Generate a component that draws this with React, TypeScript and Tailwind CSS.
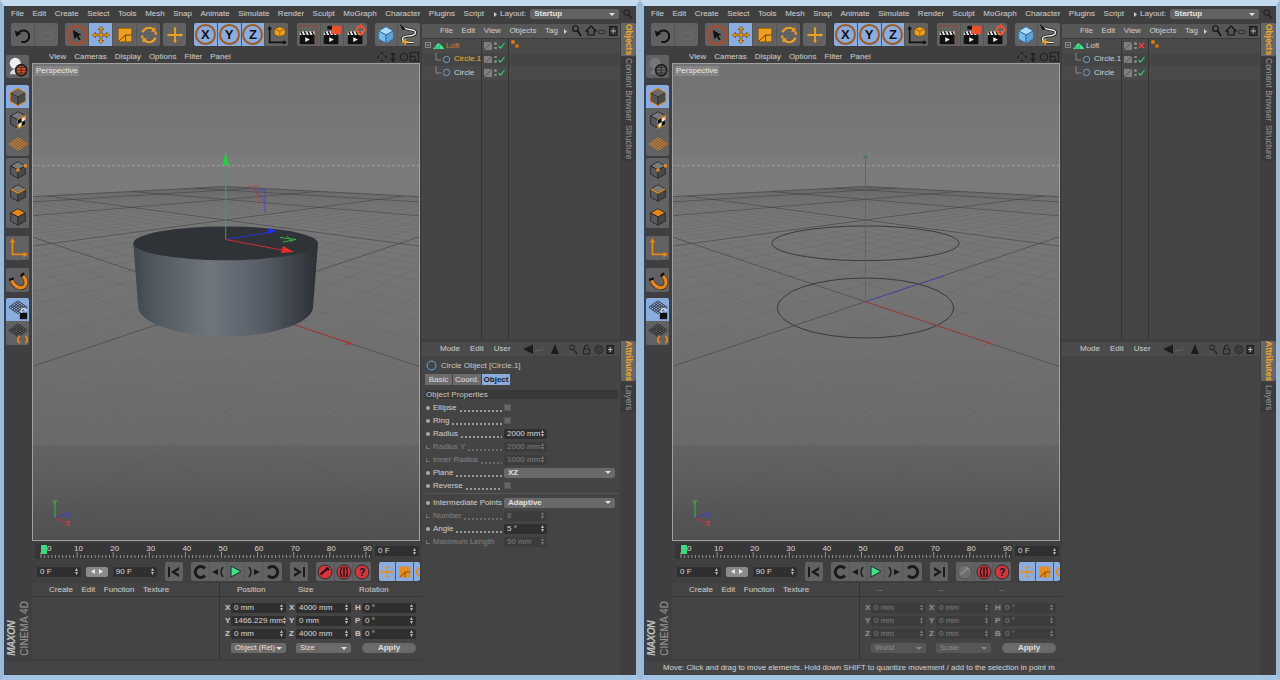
import React from "react";

const ORANGE = "#f0a020";

/* ---------- small building blocks ---------- */

function Handle({ className }: { className: string }) {
  return (
    <div
      className={`shrink-0 bg-[radial-gradient(#8c8c8c_40%,transparent_45%)] bg-[length:2px_2px] ${className}`}
    />
  );
}

function Ic({ children, size = 22 }: { children: React.ReactNode; size?: number }) {
  return (
    <svg viewBox="0 0 24 24" width={size} height={size} fill="none">
      {children}
    </svg>
  );
}

function Btn({ active, children }: { active?: boolean; children?: React.ReactNode }) {
  return (
    <div
      className={`flex min-w-0 flex-1 items-center justify-center overflow-hidden border-r border-[#555] last:border-r-0 ${
        active ? "bg-[#8aacdf]" : "bg-[#626262]"
      }`}
    >
      {children}
    </div>
  );
}

function Stepper({ dim }: { dim?: boolean }) {
  return (
    <svg width="3" height="7" viewBox="0 0 3 7" className="shrink-0">
      <path d="M1.5 0 3 3H0zM0 4h3L1.5 7z" fill={dim ? "#777" : "#bbb"} />
    </svg>
  );
}

function Field({ text, dim, className }: { text: string; dim?: boolean; className: string }) {
  return (
    <div
      className={`flex h-[10px] items-center justify-between rounded-[2px] px-[3px] text-[8px] leading-none ${
        dim ? "bg-[#3c3c3c] text-[#6f6f6f]" : "bg-[#2f2f2f] text-[#c8c8c8]"
      } ${className}`}
    >
      <span className="whitespace-nowrap">{text}</span>
      <Stepper dim={dim} />
    </div>
  );
}

function Caret({ dim }: { dim?: boolean }) {
  return (
    <svg width="6" height="3" viewBox="0 0 6 3" className="shrink-0">
      <path d="M0 0h6L3 3z" fill={dim ? "#888" : "#e0e0e0"} />
    </svg>
  );
}

/* ---------- toolbar icons ---------- */

const CubeFaces = ({
  top = "#7a7a7a",
  left = "#5a5a5a",
  right = "#484848",
  stroke = "#2a2a2a",
  outline = "",
}) => (
  <>
    <path d="M12 3 20 7.5 12 12 4 7.5z" fill={top} stroke={stroke} strokeLinejoin="round" />
    <path d="M4 7.5 12 12v9l-8-4.5z" fill={left} stroke={stroke} strokeLinejoin="round" />
    <path d="M20 7.5 12 12v9l8-4.5z" fill={right} stroke={stroke} strokeLinejoin="round" />
    {outline && <path d="M12 2.500 20.500 7.500v9L12 21.500 3.500 16.500v-9z" stroke={outline} strokeWidth="1.200" strokeLinejoin="round" />}
  </>
);

function Diamond({ color, cy = 10, h = 7 }: { color: string; cy?: number; h?: number }) {
  const lines = [];
  for (let i = 0; i <= 5; i++) {
    const t = i / 5;
    lines.push(
      <path
        key={`a${i}`}
        d={`M${2 + 10 * t} ${cy - h * t}L${12 + 10 * t} ${cy + h - h * t}`}
        stroke={color}
        strokeWidth=".8"
      />,
      <path
        key={`b${i}`}
        d={`M${2 + 10 * t} ${cy + h * t}L${12 + 10 * t} ${cy - h + h * t}`}
        stroke={color}
        strokeWidth=".8"
      />
    );
  }
  return <>{lines}</>;
}

const MoveIcon = () => (
  <Ic>
    <path
      d="M12 2.5 15 6h-2v5h5V9l3.5 3-3.5 3v-2h-5v5h2l-3 3.5L9 18h2v-5H6v2l-3.5-3L6 9v2h5V6H9z"
      fill={ORANGE}
      stroke="#5c3c08"
      strokeWidth=".7"
    />
  </Ic>
);

const ScaleIcon = () => (
  <Ic>
    <rect x="4.5" y="4.5" width="15" height="15" fill={ORANGE} stroke="#6a4408" strokeWidth=".7" />
    <path d="M5 19 12.5 12M12.5 12V19M12.5 12H19.5" stroke="#5a3a08" strokeWidth="1" />
  </Ic>
);

const RotateIcon = () => (
  <Ic>
    <path d="M5 9a7.5 7.5 0 0 1 12-3" stroke={ORANGE} strokeWidth="2.4" />
    <path d="M19 15a7.5 7.5 0 0 1-12 3" stroke={ORANGE} strokeWidth="2.4" />
    <path d="M19 3.5v5h-5zM5 20.5v-5h5z" fill={ORANGE} />
    <path d="M5.2 15.5a7.5 7.5 0 0 1-.7-3M18.8 8.5a7.5 7.5 0 0 1 .7 3" stroke={ORANGE} strokeWidth="2.4" />
  </Ic>
);

const LetterRing = ({ letter }: { letter: string }) => (
  <div className="flex h-[21px] w-[21px] items-center justify-center rounded-full border-2 border-[#a05a1c] text-[13px] leading-none font-bold text-[#111]">
    {letter}
  </div>
);

function Clapper({ extra }: { extra?: React.ReactNode }) {
  return (
    <Ic>
      <rect x="3" y="8" width="16" height="4" fill="#e8e8e8" />
      <path d="M4 8 6 12M8 8l2 4M12 8l2 4M16 8l2 4" stroke="#111" strokeWidth="1.6" />
      <rect x="3" y="12" width="16" height="10" fill="#111" />
      <path d="M9 14.5v5l5-2.5z" fill="#eee" />
      {extra}
    </Ic>
  );
}

function Toolbar() {
  return (
    <div className="flex h-[25px] shrink-0 items-center">
      <Handle className="ml-px h-[20px] w-[4px]" />
      <div className="ml-px flex h-[23px] w-[47px] overflow-hidden rounded-[2px]">
        <Btn>
          <Ic size={20}>
            <path d="M6 11a7 7 0 1 1 4 9" stroke="#111" strokeWidth="2.4" />
            <path d="M2 6.5 4 14l6-4z" fill="#111" />
          </Ic>
        </Btn>
        <Btn>
          <Ic size={18}>
            <rect x="5" y="9" width="14" height="8" rx="2" stroke="#6f6f6f" strokeWidth="1" />
            <path d="M14 7h5v3" stroke="#6f6f6f" />
          </Ic>
        </Btn>
      </div>
      <div className="ml-[7px] flex h-[23px] w-[95px] overflow-hidden rounded-[2px]">
        <Btn>
          <Ic>
            <circle cx="12" cy="12" r="10" stroke="#b8461f" strokeWidth="2" />
            <path d="M7.5 6.5 17 12l-3.6.9 2.6 4-1.6 1-2.6-4L9 16.5z" fill="#111" />
          </Ic>
        </Btn>
        <Btn active>
          <MoveIcon />
        </Btn>
        <Btn>
          <ScaleIcon />
        </Btn>
        <Btn>
          <RotateIcon />
        </Btn>
      </div>
      <div className="ml-[3px] flex h-[23px] w-[23px] overflow-hidden rounded-[2px]">
        <Btn>
          <Ic>
            <path d="M12 3 14 6h-1v5h5v-1l3 2-3 2v-1h-5v5h1l-2 3-2-3h1v-5H6v1l-3-2 3-2v1h5V6h-1z" fill={ORANGE} />
          </Ic>
        </Btn>
      </div>
      <div className="ml-[8px] flex h-[23px] w-[94px] overflow-hidden rounded-[2px]">
        <Btn active>
          <LetterRing letter="X" />
        </Btn>
        <Btn active>
          <LetterRing letter="Y" />
        </Btn>
        <Btn active>
          <LetterRing letter="Z" />
        </Btn>
        <Btn>
          <Ic>
            <path d="M4 5v15h16" stroke="#111" strokeWidth="1.8" />
            <path d="M4 2 1.5 6h5zM23 20l-4-2.5v5z" fill="#111" />
            <path d="M15 3 21 5.5v6L15 14l-6-2.5v-6z" fill={ORANGE} stroke="#5c3808" strokeWidth=".6" />
            <path d="M9 5.500 15 8l6-2.500M15 8v6" stroke="#8a5410" strokeWidth=".8" />
          </Ic>
        </Btn>
      </div>
      <div className="ml-[9px] flex h-[23px] w-[70px] overflow-hidden rounded-[2px]">
        <Btn>
          <Clapper extra={<path d="M3 7V2h19v19h-2" stroke="#9c3c20" strokeWidth="1" />} />
        </Btn>
        <Btn>
          <Clapper
            extra={
              <>
                <rect x="11" y="2" width="11" height="9" fill="#e8532c" />
                <rect x="7" y="2" width="5" height="4" fill="#111" />
              </>
            }
          />
        </Btn>
        <Btn>
          <Clapper
            extra={
              <>
                <circle cx="17" cy="6.500" r="4" stroke="#e8532c" strokeWidth="2.4" />
                <path d="M17 0v3M17 10v3M11 6.500h2M21 6.500h2" stroke="#e8532c" strokeWidth="1.800" />
              </>
            }
          />
        </Btn>
      </div>
      <div className="ml-[8px] flex h-[23px] w-[45px] overflow-hidden rounded-[2px]">
        <Btn>
          <Ic>
            <CubeFaces top="#a8dcf8" left="#78bcec" right="#5ea4dc" stroke="#3a6c94" />
          </Ic>
        </Btn>
        <Btn>
          <Ic>
            <path d="M6 4c4 3 14 1 13 6s-14 1-14 6 8 4 12 4" stroke="#222" strokeWidth="3.200" />
            <path d="M6 4c4 3 14 1 13 6s-14 1-14 6 8 4 12 4" stroke="#eee" strokeWidth="1.500" />
            <path d="M2 0 8 5 5 7z" fill="#111" />
            <path d="M8 16v7M4.500 19.500h7" stroke={ORANGE} strokeWidth="1.800" />
          </Ic>
        </Btn>
      </div>
    </div>
  );
}

/* ---------- left icon column ---------- */

function Sidebar({ selected }: { selected: boolean }) {
  const o = "#e8861c";
  return (
    <div className="flex h-full w-[27px] shrink-0 flex-col pt-[3px] pl-px">
      <Handle className="ml-[3px] h-[2px] w-[17px]" />
      <div className="mt-[3px] flex h-[23px] w-[23px] flex-col overflow-hidden rounded-[2px]">
        <Btn>
          <Ic>
            <circle cx="9" cy="8" r="6" fill={selected ? "#eee" : "#777"} />
            <path d="M3 20c1-5 5-6 8-6v6z" fill={selected ? "#ddd" : "#777"} />
            <circle cx="15.500" cy="15.500" r="7" fill="#222" />
            <circle cx="15.500" cy="15.500" r="5" fill={selected ? "#d8542c" : "#666"} />
            <path d="M10.500 15.500h10M15.500 10.500v10M11.500 12.500h8M11.500 18.500h8" stroke="#222" strokeWidth=".8" />
          </Ic>
        </Btn>
      </div>

      <div className="mt-[7px] flex w-[23px] flex-col overflow-hidden rounded-[2px]">
        <div className="flex h-[23px]">
          <Btn active>
            <Ic>
              <CubeFaces top="#6a6a6a" left="#585858" right="#4c4c4c" stroke="#333" outline={o} />
            </Ic>
          </Btn>
        </div>
        <div className="flex h-[24px]">
          <Btn>
            <Ic>
              <CubeFaces />
              <path d="M20 7.500 12 12v9l8-4.500z" fill="#eee" stroke={o} strokeWidth="1.400" />
              <path d="M12 12l4-2.250v4.500L12 16.500zM16 14.250l4-2.250v4.500l-4 2.250z" fill="#111" />
            </Ic>
          </Btn>
        </div>
        <div className="flex h-[24px]">
          <Btn>
            <Ic>
              <Diamond color="#e0801c" cy={12} />
            </Ic>
          </Btn>
        </div>
      </div>

      <div className="mt-[2px] flex w-[23px] flex-col overflow-hidden rounded-[2px]">
        <div className="flex h-[23px]">
          <Btn>
            <Ic>
              <CubeFaces />
              <circle cx="12" cy="12" r="2" fill={o} />
              <circle cx="20" cy="7.500" r="2" fill={o} />
            </Ic>
          </Btn>
        </div>
        <div className="flex h-[24px]">
          <Btn>
            <Ic>
              <CubeFaces />
              <path d="M4 7.500 12 12l8-4.500" stroke={o} strokeWidth="1.400" />
            </Ic>
          </Btn>
        </div>
        <div className="flex h-[23px]">
          <Btn>
            <Ic>
              <CubeFaces top={o} />
            </Ic>
          </Btn>
        </div>
      </div>

      <div className="mt-[8px] flex h-[24px] w-[23px] overflow-hidden rounded-[2px]">
        <Btn>
          <Ic>
            <path d="M6 4v15h14" stroke={o} strokeWidth="2" />
            <path d="M6 1 3 6h6zM23 19l-5-3v6z" fill={o} />
          </Ic>
        </Btn>
      </div>

      <div className="mt-[8px] flex h-[24px] w-[23px] overflow-hidden rounded-[2px]">
        <Btn>
          <Ic>
            <path d="M5 11C6 18 14 23 19 19 22 16 21 11 17 7" stroke="#2a2a2a" strokeWidth="5" />
            <path d="M5 11C6 18 14 23 19 19 22 16 21 11 17 7" stroke={o} strokeWidth="3.600" />
            <path d="M2 10.500l5-1.500.8 2.500-5 1.500zM14 7l3.500-3.500 2 2-3.500 3.500z" fill="#111" />
          </Ic>
        </Btn>
      </div>

      <div className="mt-[6px] flex w-[23px] flex-col overflow-hidden rounded-[2px]">
        <div className="flex h-[23px]">
          <Btn active>
            <Ic>
              <Diamond color="#222" cy={9} />
              <rect x="14" y="15" width="8" height="7" fill="#111" />
              <path d="M15.500 15v-2a2.500 2.500 0 0 1 5 0" stroke="#eee" strokeWidth="1.400" />
            </Ic>
          </Btn>
        </div>
        <div className="flex h-[24px]">
          <Btn>
            <Ic>
              <Diamond color="#222" cy={9} />
              <path d="M14 15a5 5 0 0 0 0 8M20 15a5 5 0 0 1 0 8" stroke={o} strokeWidth="2" />
            </Ic>
          </Btn>
        </div>
      </div>
    </div>
  );
}

/* ---------- viewport drawing ---------- */

const project = (u: number, v: number) => {
  const w = 0.007315 + (0.01087 * (u + v)) / 2;
  return [225.5 + (2.217 * (u - v)) / w, 165 + 1 / w];
};

const gridLine = (k: number) => {
  const t0 = -1.162 - k;
  const a = project(t0, k);
  const b = project(3.6, k);
  const c = project(k, t0);
  const d = project(k, 3.6);
  return `M${a[0]} ${a[1]}L${b[0]} ${b[1]}M${c[0]} ${c[1]}L${d[0]} ${d[1]}`;
};

const minorLines: number[] = [];
for (let i = -9; i <= 36; i++) {
  if (i % 10 !== 0) minorLines.push(i / 10);
}

function Viewport({ selected }: { selected: boolean }) {
  return (
    <div className="relative h-[478px] w-[388px] border border-[#a0a0a0]">
      <svg viewBox="33 64 386 476" width="386" height="476" className="block">
        <defs>
          <linearGradient id="vp-bg" x1="0" y1="63" x2="0" y2="541" gradientUnits="userSpaceOnUse">
            <stop offset="0" stopColor="#727272" />
            <stop offset="0.197" stopColor="#7a7a7a" />
            <stop offset="0.198" stopColor="#7c7c7c" />
            <stop offset="0.799" stopColor="#6a6a6a" />
            <stop offset="0.8" stopColor="#646464" />
            <stop offset="1" stopColor="#505050" />
          </linearGradient>
          <linearGradient id="cyl" x1="133" y1="0" x2="318" y2="0" gradientUnits="userSpaceOnUse">
            <stop offset="0" stopColor="#3f464d" />
            <stop offset="0.12" stopColor="#505860" />
            <stop offset="0.42" stopColor="#70767e" />
            <stop offset="0.7" stopColor="#565d66" />
            <stop offset="0.93" stopColor="#353a40" />
            <stop offset="1" stopColor="#2c3035" />
          </linearGradient>
        </defs>
        <rect x="32" y="63" width="388" height="478" fill="url(#vp-bg)" />
        <path d="M32 165.700H420" stroke="#a4a4a4" strokeDasharray="3 2" strokeWidth=".8" />
        {minorLines.map((k) => (
          <path key={k} d={gridLine(k)} stroke="#4c4c4c" strokeOpacity=".16" strokeWidth=".8" />
        ))}
        {[0, 1, 2, 3, 3.6].map((k) => (
          <path key={k} d={gridLine(k)} stroke="#404040" strokeOpacity=".65" strokeWidth=".9" />
        ))}

        {selected ? (
          <>
            <path d="M225.500 301.700 353 344" stroke="#b83232" strokeWidth=".9" />
            <path d="M353 344l-7-3.500 1 3.500-3 1.500z" fill="#b83232" />
            <path d="M133.300 243 138.300 308A87.500 30 0 0 0 313 308L318 243z" fill="url(#cyl)" />
            <ellipse cx="225.700" cy="243.300" rx="92.300" ry="16.900" fill="#2f3338" />
            <path d="M225.700 239.500V160" stroke="#30b040" strokeWidth=".9" />
            <path d="M225.700 152 229 165H222.400z" fill="#20d040" />
            <path d="M225.700 239.500 270 232" stroke="#2830d8" strokeWidth="1" />
            <path d="M277 231 268 234V228z" fill="#2030e0" />
            <path d="M225.700 239.500 282 250" stroke="#c83030" strokeWidth="1" />
            <path d="M294 252 281 253 283 246z" fill="#e82c2c" />
            <path d="M280 237.500 296 239.500 283 242M287 236 292 242" stroke="#30b840" strokeWidth="1" fill="none" />
            <path d="M248 186H259V205M250 188Q258 192 259 200" stroke="#b04848" strokeWidth=".8" fill="none" />
            <path d="M254 190H265V213M257 192Q263 197 265 204" stroke="#4848c8" strokeWidth=".8" fill="none" />
          </>
        ) : (
          <>
            <ellipse cx="225.500" cy="243.300" rx="93.500" ry="17.300" fill="none" stroke="#3a3a3a" strokeWidth="1" />
            <ellipse cx="225.500" cy="308" rx="88" ry="30" fill="none" stroke="#3a3a3a" strokeWidth="1" />
            <path d="M225.500 301.700V155" stroke="#3c7c40" strokeWidth=".9" />
            <path d="M223 159 225.500 155 228 159" stroke="#3c7c40" strokeWidth=".8" fill="none" />
            <path d="M225.500 301.700 305 275.700" stroke="#4a4aa8" strokeWidth=".9" />
            <path d="M305 275.700l-5 .2 1.500 2z" fill="#4a4aa8" />
            <path d="M225.500 301.700 353 344" stroke="#a83c3c" strokeWidth=".9" />
            <path d="M353 344l-7-3 1 3-3 1.500" stroke="#a83c3c" strokeWidth=".8" fill="none" />
          </>
        )}

        <path d="M55 518V504" stroke="#30a040" strokeWidth="1.500" />
        <path d="M55 518 66 514" stroke="#3838c0" strokeWidth="1" />
        <path d="M55 518 66 522" stroke="#c03030" strokeWidth="1" />
        <g fontFamily="Liberation Sans, sans-serif" fontSize="7" fontWeight="700">
          <text x="52.500" y="505" fill="#30b048">Y</text>
          <text x="65.500" y="517" fill="#3838d0">Z</text>
          <text x="65.500" y="526" fill="#d83030">X</text>
        </g>
      </svg>
      <span className="absolute top-[2px] left-[2px] bg-[#858585] px-[1px] text-[8px] leading-[10px] text-[#e0e0e0]">
        Perspective
      </span>
    </div>
  );
}

/* ---------- timeline ---------- */

function Timeline() {
  const ticks = [];
  for (let i = 0; i <= 92; i++) {
    const x = 6 + i * 3.61;
    ticks.push(<path key={i} d={`M${x} ${i % 10 === 0 ? 9 : 12}V15`} stroke="#bbb" strokeWidth=".7" />);
  }
  return (
    <div className="mt-[2px] flex h-[16px] shrink-0 items-center">
      <Handle className="h-[10px] w-[3px]" />
      <svg width="337" height="16" className="block shrink-0 bg-[#363636]">
        {ticks}
        <rect x="6" y="2" width="6" height="9" fill="#40d880" />
        <g fontFamily="Liberation Sans, sans-serif" fontSize="8" fill="#c8c8c8">
          {[0, 10, 20, 30, 40, 50, 60, 70, 80, 90].map((n, i) => (
            <text key={n} x={i === 0 ? 12 : 4 + i * 36.1 - 1} y="8">
              {n}
            </text>
          ))}
        </g>
      </svg>
      <Field text="0 F" className="ml-[3px] w-[44px]" />
    </div>
  );
}

function Cbtn({
  children,
  active,
  className = "",
}: {
  children: React.ReactNode;
  active?: boolean;
  className?: string;
}) {
  return (
    <div
      className={`flex h-[19px] items-center justify-center overflow-hidden border-r border-[#575757] last:border-r-0 ${
        active ? "bg-[#8aacdf]" : "bg-[#626262]"
      } ${className}`}
    >
      {children}
    </div>
  );
}

function RedIcon({ children, off }: { children: React.ReactNode; off?: boolean }) {
  return (
    <svg viewBox="0 0 16 16" width="16" height="16">
      <circle cx="8" cy="8" r="7" fill={off ? "#6e6e6e" : "#d8343c"} stroke={off ? "#555" : "#2a2a2a"} strokeWidth="1" />
      {children}
    </svg>
  );
}

function Controls({ selected }: { selected: boolean }) {
  const ink = "#1a1a1a";
  return (
    <div className="mt-[3px] flex h-[19px] shrink-0 items-center">
      <Handle className="h-[14px] w-[3px]" />
      <Field text="0 F" className="ml-[2px] w-[44px]" />
      <div className="ml-[5px] flex h-[10px] w-[22px] items-center justify-around rounded-[2px] bg-[#8a8a8a] px-[2px]">
        <svg width="5" height="5"><path d="M5 0v5L1 2.500z" fill="#e8e8e8" /></svg>
        <svg width="5" height="5"><path d="M0 0v5l4-2.500z" fill="#e8e8e8" /></svg>
      </div>
      <Field text="90 F" className="ml-[5px] w-[44px]" />
      <div className="ml-[8px] flex overflow-hidden rounded-[2px]">
        <Cbtn className="w-[18px]">
          <svg width="13" height="10" viewBox="0 0 13 10">
            <path d="M1 0h2v10H1zM12 0v3L8 5l4 2v3L4 5z" fill={ink} />
          </svg>
        </Cbtn>
      </div>
      <div className="ml-[8px] flex overflow-hidden rounded-[2px]">
        <Cbtn className="w-[19px]">
          <svg width="14" height="14" viewBox="0 0 14 14">
            <path d="M12 3.500A5.500 5.500 0 1 0 12 10.500" fill="none" stroke={ink} strokeWidth="3" />
          </svg>
        </Cbtn>
        <Cbtn className="w-[18px]">
          <svg width="14" height="12" viewBox="0 0 14 12">
            <path d="M7 3v6L1 6z" fill={ink} />
            <path d="M12 1Q8 6 12 11" fill="none" stroke={ink} strokeWidth="1.400" />
          </svg>
        </Cbtn>
        <Cbtn className="w-[18px]">
          <svg width="13" height="13" viewBox="0 0 13 13">
            <path d="M2 1 12 6.500 2 12z" fill="#3ee08a" stroke="#1c2a22" strokeWidth="1" />
          </svg>
        </Cbtn>
        <Cbtn className="w-[18px]">
          <svg width="14" height="12" viewBox="0 0 14 12">
            <path d="M7 3v6l6-3z" fill={ink} />
            <path d="M2 1Q6 6 2 11" fill="none" stroke={ink} strokeWidth="1.400" />
          </svg>
        </Cbtn>
        <Cbtn className="w-[19px]">
          <svg width="14" height="14" viewBox="0 0 14 14">
            <path d="M2 3.500A5.500 5.500 0 1 1 2 10.500" fill="none" stroke={ink} strokeWidth="3" />
          </svg>
        </Cbtn>
      </div>
      <div className="ml-[8px] flex overflow-hidden rounded-[2px]">
        <Cbtn className="w-[18px]">
          <svg width="13" height="10" viewBox="0 0 13 10">
            <path d="M10 0h2v10h-2zM1 0v3l4 2-4 2v3l8-5z" fill={ink} />
          </svg>
        </Cbtn>
      </div>
      <div className="ml-[8px] flex overflow-hidden rounded-[2px]">
        <Cbtn className="w-[19px]">
          <RedIcon off={!selected}>
            <path d="M3.500 10.500 10 5M9 3.500l3 2.500" stroke={selected ? "#111" : "#8a8a8a"} strokeWidth="1.800" />
          </RedIcon>
        </Cbtn>
        <Cbtn className="w-[18px]">
          <RedIcon>
            <path d="M6 3Q3 8 6 13M10 3Q13 8 10 13M8 3v10" fill="none" stroke="#111" strokeWidth="1.400" />
          </RedIcon>
        </Cbtn>
        <Cbtn className="w-[18px]">
          <RedIcon>
            <text x="8" y="12" textAnchor="middle" fontSize="11" fontWeight="700" fontFamily="Liberation Sans, sans-serif" fill="#111">
              ?
            </text>
          </RedIcon>
        </Cbtn>
      </div>
      <div className="ml-[8px] flex w-[41px] overflow-hidden rounded-[2px]">
        <Cbtn active className="w-[17px] shrink-0">
          <Ic size={16}>
            <path d="M12 2.500 15 6h-2v5h5V9l3.500 3-3.500 3v-2h-5v5h2l-3 3.500L9 18h2v-5H6v2l-3.500-3L6 9v2h5V6H9z" fill="#e88a1c" />
          </Ic>
        </Cbtn>
        <Cbtn active className="w-[18px] shrink-0">
          <Ic size={16}>
            <rect x="4" y="4" width="16" height="16" fill="#e88a1c" />
            <path d="M4 20 12 12M12 12v8M12 12h8" stroke="#5a3a08" />
          </Ic>
        </Cbtn>
        <Cbtn active className="w-[6px] shrink-0 justify-start">
          <div className="ml-[2px] h-[10px] w-[6px] shrink-0 rounded-l-full border-2 border-r-0 border-[#e88a1c]" />
        </Cbtn>
      </div>
    </div>
  );
}

/* ---------- bottom panels ---------- */

function PanelMenu({ items, className }: { items: string[]; className: string }) {
  return (
    <div className={`flex items-center text-[8px] text-[#c4c4c4] ${className}`}>
      {items.map((t) => (
        <span key={t} className="whitespace-nowrap">
          {t}
        </span>
      ))}
    </div>
  );
}

function Logo() {
  return (
    <div className="flex w-[27px] shrink-0 items-end justify-center gap-[2px] pb-[3px]">
      <span className="rotate-180 text-[10px] leading-[10px] font-bold italic tracking-[-0.5px] text-[#bdbdbd] [writing-mode:vertical-rl]">
        MAXON
      </span>
      <span className="rotate-180 text-[10px] leading-[11px] tracking-[0.1px] text-[#8e8e8e] [writing-mode:vertical-rl]">
        CINEMA 4D
      </span>
    </div>
  );
}

function MaterialPanel() {
  return (
    <div className="w-[188px] shrink-0 border-r border-[#333] bg-[#444]">
      <div className="flex h-[14px] items-center border-b border-[#383838] pl-[4px]">
        <Handle className="h-[8px] w-[8px]" />
        <PanelMenu items={["Create", "Edit", "Function", "Texture"]} className="ml-[5px] gap-[8.5px]" />
      </div>
    </div>
  );
}

function CoordRow({ labels, values, dim }: { labels: string[]; values: string[]; dim: boolean }) {
  const labelCls = `text-[8px] leading-none font-bold ${dim ? "text-[#8a8a8a]" : "text-[#c0c0c0]"}`;
  return (
    <div className="flex h-[13px] items-center pl-[5px]">
      <span className={`w-[6px] ${labelCls}`}>{labels[0]}</span>
      <Field text={values[0]} dim={dim} className="w-[55px]" />
      <span className={`ml-[3px] w-[7px] ${labelCls}`}>{labels[1]}</span>
      <Field text={values[1]} dim={dim} className="w-[55px]" />
      <span className={`ml-[4px] w-[7px] ${labelCls}`}>{labels[2]}</span>
      <Field text={values[2]} dim={dim} className="w-[54px]" />
    </div>
  );
}

function CoordPanel({ selected }: { selected: boolean }) {
  const rows = selected
    ? [
        { l: ["X", "X", "H"], v: ["0 mm", "4000 mm", "0 °"] },
        { l: ["Y", "Y", "P"], v: ["1466.229 mm", "0 mm", "0 °"] },
        { l: ["Z", "Z", "B"], v: ["0 mm", "4000 mm", "0 °"] },
      ]
    : [
        { l: ["X", "X", "H"], v: ["0 mm", "0 mm", "0 °"] },
        { l: ["Y", "Y", "P"], v: ["0 mm", "0 mm", "0 °"] },
        { l: ["Z", "Z", "B"], v: ["0 mm", "0 mm", "0 °"] },
      ];
  return (
    <div className="flex-1 bg-[#444]">
      <div className="flex h-[14px] items-center border-b border-[#383838] pl-[4px]">
        <Handle className="h-[8px] w-[8px]" />
        <div
          className={`grid grid-cols-[61px_61px_50px] pl-[5px] text-[8px] font-medium ${
            selected ? "text-[#c4c4c4]" : "text-[#7c7c7c]"
          }`}
        >
          <span>{selected ? "Position" : "--"}</span>
          <span>{selected ? "Size" : "--"}</span>
          <span>{selected ? "Rotation" : "--"}</span>
        </div>
      </div>
      <div className="pt-[4px]">
        {rows.map((r) => (
          <CoordRow key={r.l[0]} labels={r.l} values={r.v} dim={!selected} />
        ))}
      </div>
      <div className="mt-[3px] flex pl-[11px]">
        <div
          className={`flex h-[10px] w-[55px] items-center justify-between rounded-[2px] px-[4px] text-[7.5px] whitespace-nowrap ${
            selected ? "bg-[#6a6a6a] text-[#dcdcdc]" : "bg-[#565656] text-[#808080]"
          }`}
        >
          {selected ? "Object (Rel)" : "World"}
          <Caret dim={!selected} />
        </div>
        <div
          className={`ml-[10px] flex h-[10px] w-[55px] items-center justify-between rounded-[2px] px-[4px] text-[7.5px] ${
            selected ? "bg-[#6a6a6a] text-[#dcdcdc]" : "bg-[#565656] text-[#808080]"
          }`}
        >
          {selected ? "Size" : "Scale"}
          <Caret dim={!selected} />
        </div>
        <div className="ml-[11px] flex h-[10px] w-[54px] items-center justify-center rounded-full bg-[#6a6a6a] text-[8px] font-bold text-[#d8d8d8]">
          Apply
        </div>
      </div>
    </div>
  );
}

/* ---------- object manager ---------- */

function LayerCell({ state }: { state: "ok" | "off" }) {
  return (
    <div className="flex h-[13.5px] items-center pl-[2px]">
      <div className="relative h-[7.500px] w-[7.500px] bg-[#7f7f7f]">
        <svg width="8" height="8" className="absolute top-0 left-0">
          <path d="M0 8 8 0" stroke="#555" />
        </svg>
      </div>
      <div className="ml-[2.500px] flex flex-col gap-[2px]">
        <div className="h-[2.500px] w-[2.500px] rounded-full bg-[#8a8a8a]" />
        <div className="h-[2.500px] w-[2.500px] rounded-full bg-[#8a8a8a]" />
      </div>
      <svg width="7" height="7" viewBox="0 0 7 7" className="ml-[1px]">
        {state === "ok" ? (
          <path d="M.5 4 2.500 6 6.500 1" fill="none" stroke="#30d070" strokeWidth="1.200" />
        ) : (
          <path d="M1 1l5 5M6 1 1 6" stroke="#e84040" strokeWidth="1.600" />
        )}
      </svg>
    </div>
  );
}

function ObjectManager({ selected }: { selected: boolean }) {
  return (
    <div className="flex flex-1 flex-col">
      <div className="flex h-[15px] shrink-0 items-center border-b border-[#3a3a3a] bg-[#565656] pl-[4px]">
        <Handle className="h-[8px] w-[8px]" />
        <PanelMenu items={["File", "Edit", "View", "Objects", "Tag"]} className="ml-[6px] gap-[8.5px]" />
        <svg width="3" height="5" className="ml-[6px]">
          <path d="M0 0v5l3-2.500z" fill="#ccc" />
        </svg>
        <svg width="46" height="12" viewBox="0 0 46 12" className="mr-[2px] ml-auto">
          <circle cx="3.500" cy="3.500" r="2.800" fill="none" stroke="#111" strokeWidth="1.100" />
          <path d="M5.500 5.500 9 11" stroke="#111" strokeWidth="1.500" />
          <path d="M19 1 24 6h-2v4h-6V6h-2z" fill="none" stroke="#111" strokeWidth="1.200" />
          <ellipse cx="29.500" cy="7" rx="3.500" ry="1.800" fill="none" stroke="#222" strokeWidth=".8" />
          <rect x="37.500" y="1.500" width="7.500" height="9" fill="#333" stroke="#111" strokeWidth=".8" />
          <path d="M38.700 6H44M41.250 3.500V8.500" stroke="#ccc" strokeWidth=".8" />
        </svg>
      </div>
      <div className="flex min-h-0 flex-1 bg-[#454545]">
        <div className="w-[60px] shrink-0 border-r border-[#333] text-[8px]">
          <div className="flex h-[13.5px] items-center bg-[#4a4a4a] pl-[3px]">
            <svg width="7" height="7" viewBox="0 0 7 7" className="shrink-0">
              <rect x=".5" y=".5" width="5" height="5" fill="none" stroke="#999" strokeWidth=".8" />
              <path d="M1.500 3h3" stroke="#bbb" strokeWidth=".8" />
            </svg>
            <svg width="11" height="8" viewBox="0 0 11 8" className="ml-[1px] shrink-0">
              <path d="M0 7 5 1l2 1 3 3 1 2z" fill="#40e890" />
              <path d="M3 4v3M6 3v4" stroke="#157a48" strokeWidth=".7" />
            </svg>
            <span className={`ml-[2px] ${selected ? "text-[#b87818]" : "text-[#c4c4c4]"}`}>Loft</span>
          </div>
          <div className="flex h-[13.5px] items-center">
            <svg width="22" height="13" className="shrink-0">
              <path d="M14 0v7h5" stroke="#888" fill="none" />
            </svg>
            <svg width="10" height="13" className="-ml-px shrink-0">
              <circle cx="3.500" cy="6.500" r="3.200" fill="none" stroke="#6a9cd0" strokeWidth="1" />
            </svg>
            <span className={`ml-[1px] ${selected ? "text-[#f0a020]" : "text-[#c4c4c4]"}`}>Circle.1</span>
          </div>
          <div className="flex h-[13.5px] items-center bg-[#4a4a4a]">
            <svg width="22" height="13" className="shrink-0">
              <path d="M14 0v7h5" stroke="#888" fill="none" />
            </svg>
            <svg width="10" height="13" className="-ml-px shrink-0">
              <circle cx="3.500" cy="6.500" r="3.200" fill="none" stroke="#6a9cd0" strokeWidth="1" />
            </svg>
            <span className="ml-[1px] text-[#c4c4c4]">Circle</span>
          </div>
        </div>
        <div className="w-[27px] shrink-0 border-r border-[#333]">
          <div className="bg-[#4a4a4a]">
            <LayerCell state={selected ? "ok" : "off"} />
          </div>
          <LayerCell state="ok" />
          <div className="bg-[#4a4a4a]">
            <LayerCell state="ok" />
          </div>
        </div>
        <div className="flex-1">
          <div className="h-[13.5px] bg-[#4a4a4a] pl-[1px]">
            <svg width="10" height="11">
              <circle cx="3" cy="3" r="2" fill="#d87c1c" />
              <circle cx="7" cy="7" r="2" fill="#c86c14" />
            </svg>
          </div>
          <div className="h-[13.5px]" />
          <div className="h-[13.5px] bg-[#4a4a4a]" />
        </div>
      </div>
    </div>
  );
}

/* ---------- attribute manager ---------- */

function DotCell({ dim }: { dim?: boolean }) {
  return dim ? (
    <div className="mr-[3px] h-[4px] w-[4px] shrink-0 rounded-[1px] border-b border-l border-[#777]" />
  ) : (
    <div className="mr-[3px] h-[4px] w-[4px] shrink-0 rounded-full bg-[#a8a8a8]" />
  );
}

function Prop({
  label,
  dim,
  children,
  dots = true,
}: {
  label: string;
  dim?: boolean;
  children: React.ReactNode;
  dots?: boolean;
}) {
  return (
    <div className="flex h-[13px] items-center pl-[4px] text-[8px]">
      <DotCell dim={dim} />
      <div className={`flex w-[71px] shrink-0 items-end whitespace-nowrap ${dim ? "text-[#767676]" : "text-[#c4c4c4]"}`}>
        <span>{label}</span>
        {dots && (
          <div
            className={`mr-[2px] mb-[2px] ml-[2px] h-[2px] flex-1 bg-[length:4px_2px] ${
              dim
                ? "bg-[radial-gradient(circle,#6c6c6c_50%,transparent_55%)]"
                : "bg-[radial-gradient(circle,#9a9a9a_50%,transparent_55%)]"
            }`}
          />
        )}
      </div>
      {children}
    </div>
  );
}

const CheckBox = () => <div className="h-[7px] w-[7px] rounded-[1px] bg-[#666] shadow-[inset_0_0_0_1px_#575757]" />;

const Select = ({ text }: { text: string }) => (
  <div className="flex h-[10px] w-[111px] items-center justify-between rounded-[2px] bg-[#696969] px-[4px] text-[8px] font-bold text-[#dcdcdc]">
    {text}
    <Caret />
  </div>
);

function Attributes({ selected }: { selected: boolean }) {
  return (
    <div className="flex h-[334px] shrink-0 flex-col">
      <div className="mt-[1px] flex h-[14px] shrink-0 items-center bg-[#4b4b4b] pl-[4px]">
        <Handle className="h-[8px] w-[8px]" />
        <PanelMenu items={["Mode", "Edit", "User"]} className="ml-[6px] gap-[10px]" />
        <svg width="94" height="11" viewBox="0 0 94 11" className="ml-[12px]">
          <path d="M0 5 10 .5V10z" fill="#1c1c1c" />
          <path d="M12 7 20 5.500" stroke="#666" />
          <path d="M32 0 36 10H28z" fill="#1c1c1c" />
          <circle cx="49" cy="3.500" r="2.500" fill="none" stroke="#222" strokeWidth="1" />
          <path d="M51 6 54 10" stroke="#222" strokeWidth="1.200" />
          <rect x="60.500" y="5" width="6" height="5" fill="none" stroke="#222" strokeWidth="1" />
          <path d="M61.500 5V3a2 2 0 0 1 4 0" fill="none" stroke="#222" />
          <circle cx="76" cy="5.500" r="4" fill="none" stroke="#222" strokeWidth="1" />
          <circle cx="76" cy="5.500" r="2" fill="none" stroke="#222" strokeWidth=".8" />
          <rect x="84" y="1.500" width="6.500" height="8" fill="#333" stroke="#111" strokeWidth=".8" />
          <path d="M85 5.500H89.500M87.250 3V8" stroke="#ccc" strokeWidth=".8" />
        </svg>
      </div>
      <div className="flex-1 bg-[#444]">
        {selected && (
          <>
            <div className="mt-[3px] flex h-[13px] items-center pl-[4px]">
              <svg width="11" height="11" viewBox="0 0 11 11">
                <circle cx="5.500" cy="5.500" r="4.500" fill="none" stroke="#6aa4dc" strokeWidth="1" />
              </svg>
              <span className="ml-[4px] text-[8px] text-[#bcbcbc]">Circle Object [Circle.1]</span>
            </div>
            <div className="mt-[2px] ml-[3px] flex h-[11px] text-[8px]">
              <div className="flex w-[27px] items-center justify-center bg-[#6c6c6c] text-[#d8d8d8]">Basic</div>
              <div className="ml-px flex w-[28px] items-center justify-center bg-[#6c6c6c] text-[#d8d8d8]">Coord.</div>
              <div className="ml-px flex w-[28px] items-center justify-center bg-[#8aacdf] font-bold text-[#14181f]">
                Object
              </div>
            </div>
            <div className="mt-[5px] ml-[3px] flex h-[9px] w-[193px] items-center bg-[#383838] pl-px text-[8px] text-[#bcbcbc]">
              Object Properties
            </div>
            <div className="mt-[2px]">
              <Prop label="Ellipse">
                <CheckBox />
              </Prop>
              <Prop label="Ring">
                <CheckBox />
              </Prop>
              <Prop label="Radius">
                <Field text="2000 mm" className="w-[43px]" />
              </Prop>
              <Prop label="Radius Y" dim>
                <Field text="2000 mm" dim className="w-[43px]" />
              </Prop>
              <Prop label="Inner Radius" dim>
                <Field text="1000 mm" dim className="w-[43px]" />
              </Prop>
              <Prop label="Plane">
                <Select text="XZ" />
              </Prop>
              <Prop label="Reverse">
                <CheckBox />
              </Prop>
            </div>
            <div className="mt-[1px] mb-[2px] ml-[3px] h-px w-[194px] bg-[#565656]" />
            <Prop label="Intermediate Points" dots={false}>
              <Select text="Adaptive" />
            </Prop>
            <Prop label="Number" dim>
              <Field text="8" dim className="w-[43px]" />
            </Prop>
            <Prop label="Angle">
              <Field text="5 °" className="w-[43px]" />
            </Prop>
            <Prop label="Maximum Length" dim dots={false}>
              <Field text="50 mm" dim className="w-[43px]" />
            </Prop>
          </>
        )}
      </div>
    </div>
  );
}

function SideTab({ label, active, className }: { label: string; active?: boolean; className: string }) {
  return (
    <div
      className={`flex w-[15px] shrink-0 items-center justify-center rounded-r-[2px] text-[8.5px] whitespace-nowrap [writing-mode:vertical-rl] ${
        active ? "bg-[#666] font-bold text-[#f0a428]" : "bg-[#3a3a3a] text-[#878787]"
      } ${className}`}
    >
      {label}
    </div>
  );
}

/* ---------- one Cinema 4D window ---------- */

function CinemaWindow({ selected }: { selected: boolean }) {
  const menus = [
    "File", "Edit", "Create", "Select", "Tools", "Mesh", "Snap", "Animate", "Simulate",
    "Render", "Sculpt", "MoGraph", "Character", "Plugins", "Script",
  ];
  return (
    <div className="h-[680px] w-[640px] shrink-0 border-x-[4px] border-t-[6px] border-b-[5px] border-x-[#9fb9d4] border-t-[#c3d9ee] border-b-[#a4c4e4] pl-px">
      <div className="flex h-full flex-col bg-[#3f3f3f]">
        <div className="flex h-[16px] shrink-0 items-center pl-[6px] text-[8px] text-[#c6c6c6]">
          <div className="flex w-[483px] shrink-0 gap-[8.500px] whitespace-nowrap">
            {menus.map((m) => (
              <span key={m}>{m}</span>
            ))}
          </div>
          <svg width="3" height="5">
            <path d="M0 0v5l3-2.500z" fill="#ccc" />
          </svg>
          <span className="ml-[3px] whitespace-nowrap">Layout:</span>
          <div className="ml-[4px] flex h-[10px] w-[89px] items-center justify-between rounded-[2px] bg-[#636363] px-[4px] font-bold text-[#dcdcdc]">
            Startup
            <Caret />
          </div>
          <svg width="9" height="10" viewBox="0 0 9 10" className="ml-[4px]">
            <circle cx="3.500" cy="3.500" r="2.700" fill="none" stroke="#1c1c1c" strokeWidth="1" />
            <path d="M5.500 5.500 8.500 9.500" stroke="#1c1c1c" strokeWidth="1.300" />
          </svg>
        </div>
        <div className="flex min-h-0 flex-1">
          {/* left part */}
          <div className="flex w-[417px] shrink-0 flex-col">
            <Toolbar />
            <div className="flex h-[536px] shrink-0">
              <Sidebar selected={selected} />
              <div className="flex w-[388px] flex-col pt-[3px]">
                <div className="flex h-[13px] shrink-0 items-center pl-[4px]">
                  <Handle className="h-[8px] w-[8px]" />
                  <PanelMenu
                    items={["View", "Cameras", "Display", "Options", "Filter", "Panel"]}
                    className="ml-[5px] gap-[8px]"
                  />
                  <svg width="42" height="10" viewBox="0 0 42 10" className="mr-px ml-auto">
                    <path d="M5 0 7 2H3zM5 10 3 8H7zM0 5 2 3V7zM10 5 8 7V3z" fill="#1c1c1c" />
                    <path d="M16 1V9M14 6.500 16 9.500 18 6.500M14 2h4" stroke="#1c1c1c" strokeWidth="1.300" fill="none" />
                    <circle cx="27" cy="5" r="3.800" fill="none" stroke="#1c1c1c" strokeWidth="1" />
                    <rect x="33.500" y=".5" width="8" height="8.500" fill="none" stroke="#1c1c1c" strokeWidth=".8" />
                    <path d="M33.500 4.500H38V9" stroke="#1c1c1c" strokeWidth=".8" fill="none" />
                  </svg>
                </div>
                <Viewport selected={selected} />
                <Timeline />
                <Controls selected={selected} />
              </div>
            </div>
            <div className="flex h-[76px] shrink-0">
              <Logo />
              <MaterialPanel />
              <CoordPanel selected={selected} />
            </div>
            <div className="mt-[2px] flex h-[13px] shrink-0 items-center bg-[#444] pl-[4px]">
              <Handle className="h-[8px] w-[8px]" />
              <div className="ml-[6px] text-[7.8px] whitespace-nowrap text-[#c8c8c8]">
                {!selected &&
                  "Move: Click and drag to move elements. Hold down SHIFT to quantize movement / add to the selection in point m"}
              </div>
            </div>
          </div>
          {/* right part */}
          <div className="flex w-[198px] shrink-0 flex-col pt-[2px]">
            <ObjectManager selected={selected} />
            <div className="h-[2px] shrink-0" />
            <Attributes selected={selected} />
          </div>
          <div className="flex flex-1 flex-col pt-[1px] pl-px">
            <SideTab label="Objects" active className="h-[33px]" />
            <SideTab label="Content Browser" className="mt-px h-[65px]" />
            <SideTab label="Structure" className="mt-px h-[38px]" />
            <SideTab label="Attributes" active className="mt-[180px] h-[40px]" />
            <SideTab label="Layers" className="mt-[2px] h-[29px]" />
          </div>
        </div>
      </div>
    </div>
  );
}

export default function App() {
  return (
    <div className="flex h-[680px] w-[1280px] overflow-hidden bg-[#2a4460] font-['Liberation_Sans',sans-serif] [text-shadow:0_0_1px_rgba(190,190,190,0.3)]">
      <CinemaWindow selected={true} />
      <CinemaWindow selected={false} />
    </div>
  );
}
